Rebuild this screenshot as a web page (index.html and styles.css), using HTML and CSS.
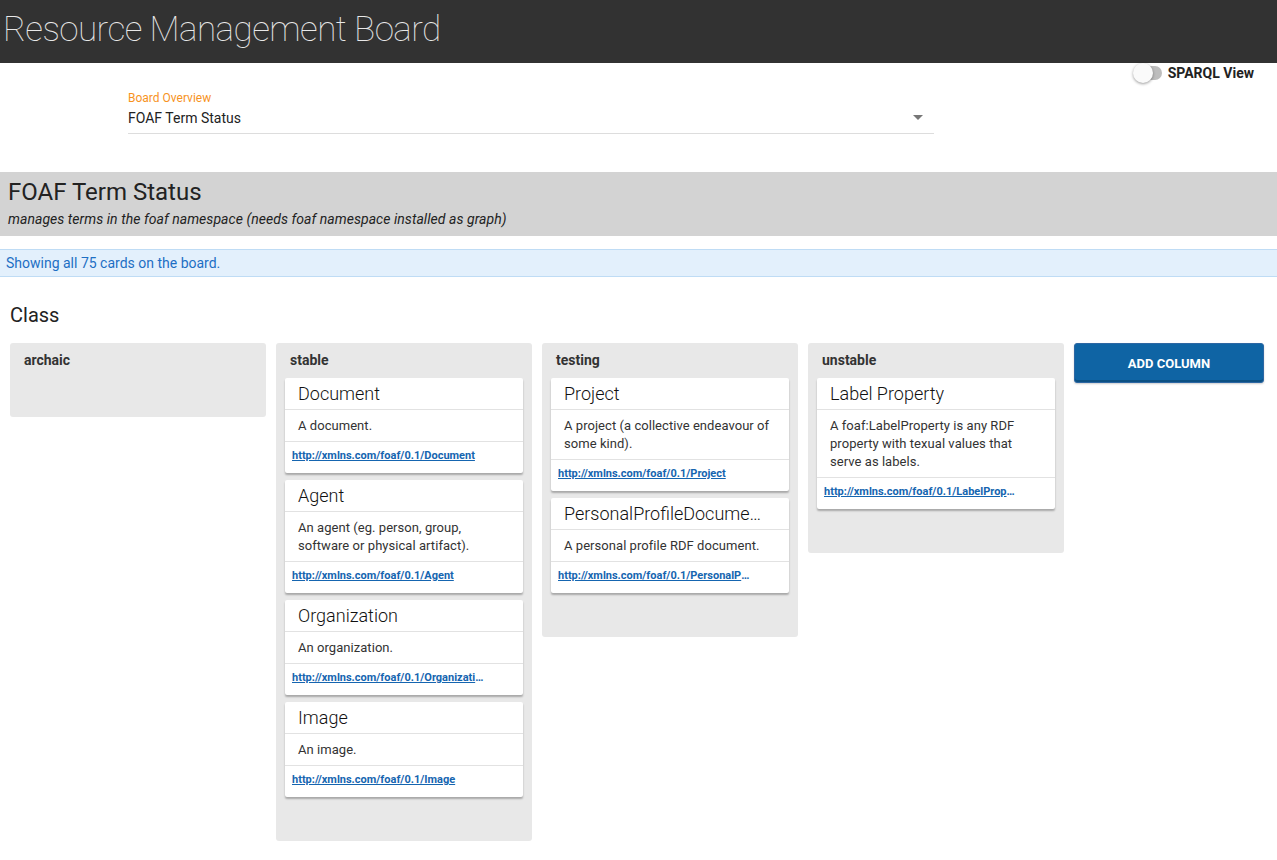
FILE: index.html
```html
<!DOCTYPE html>
<html>
<head>
<meta charset="utf-8">
<link rel="stylesheet" href="styles.css">
</head>
<body>
<header class="topbar"><h1 class="app-title">Resource Management Board</h1></header>

<div class="controls">
  <div class="select-field">
    <label class="select-label">Board Overview</label>
    <div class="select-value">
      <span>FOAF Term Status</span>
      <svg class="caret" width="10" height="5" viewBox="0 0 10 5"><path d="M0 0 L10 0 L5 5 Z" fill="#777"/></svg>
    </div>
  </div>
  <div class="toggle-wrap">
    <span class="toggle"><span class="track"></span><span class="thumb"></span></span>
    <span class="toggle-label">SPARQL View</span>
  </div>
</div>

<section class="board-head">
  <h2 class="board-title">FOAF Term Status</h2>
  <p class="board-desc">manages terms in the foaf namespace (needs foaf namespace installed as graph)</p>
</section>

<div class="info">Showing all 75 cards on the board.</div>

<h3 class="group-title">Class</h3>

<div class="columns">
  <div class="column">
    <div class="col-head">archaic</div>
    <div class="cards"></div>
  </div>
  <div class="column">
    <div class="col-head">stable</div>
    <div class="cards">
      <div class="card"><div class="card-title">Document</div><div class="card-desc">A document.</div><div class="card-link"><a href="#">http://xmlns.com/foaf/0.1/Document</a></div></div>
      <div class="card"><div class="card-title">Agent</div><div class="card-desc">An agent (eg. person, group, software or physical artifact).</div><div class="card-link"><a href="#">http://xmlns.com/foaf/0.1/Agent</a></div></div>
      <div class="card"><div class="card-title">Organization</div><div class="card-desc">An organization.</div><div class="card-link"><a href="#">http://xmlns.com/foaf/0.1/Organization</a></div></div>
      <div class="card"><div class="card-title">Image</div><div class="card-desc">An image.</div><div class="card-link"><a href="#">http://xmlns.com/foaf/0.1/Image</a></div></div>
    </div>
  </div>
  <div class="column">
    <div class="col-head">testing</div>
    <div class="cards">
      <div class="card"><div class="card-title">Project</div><div class="card-desc">A project (a collective endeavour of some kind).</div><div class="card-link"><a href="#">http://xmlns.com/foaf/0.1/Project</a></div></div>
      <div class="card"><div class="card-title">PersonalProfileDocument</div><div class="card-desc">A personal profile RDF document.</div><div class="card-link"><a href="#">http://xmlns.com/foaf/0.1/PersonalProfileDocument</a></div></div>
    </div>
  </div>
  <div class="column">
    <div class="col-head">unstable</div>
    <div class="cards">
      <div class="card"><div class="card-title">Label Property</div><div class="card-desc">A foaf:LabelProperty is any RDF property with texual values that serve as labels.</div><div class="card-link"><a href="#">http://xmlns.com/foaf/0.1/LabelProperty</a></div></div>
    </div>
  </div>
  <button class="add-col">ADD COLUMN</button>
</div>
</body>
</html>
```

FILE: styles.css
```css
* { box-sizing: border-box; }
html, body { margin: 0; padding: 0; }
body { font-family: Roboto, "Liberation Sans", sans-serif; color: #222; background: #fff; width: 1277px; }

.topbar { background: #323232; height: 63px; display: flex; align-items: center; padding-left: 3px; }
.app-title { margin: 0; font-weight: 100; font-size: 35px; letter-spacing: -0.55px; color: #e8e8e8; line-height: 1; position: relative; top: -2px; }

.controls { display: flex; justify-content: space-between; align-items: flex-start; height: 109px; padding-left: 128px; }
.select-field { width: 806px; padding-top: 28px; }
.select-label { display: block; font-size: 12px; color: #f7931e; line-height: 14px; }
.select-value { display: flex; justify-content: space-between; align-items: center; font-size: 14px; color: #222; height: 29px; border-bottom: 1px solid #ddd; padding-right: 11px; padding-bottom: 3px; }
.caret { display: block; }

.toggle-wrap { display: flex; align-items: center; gap: 7px; height: 20px; margin-top: 0; margin-right: 23px; }
.toggle { position: relative; width: 28px; height: 20px; display: block; }
.track { position: absolute; left: 3px; top: 3px; width: 26px; height: 14px; border-radius: 7px; background: #bdbdbd; }
.thumb { position: absolute; left: 0; top: 0; width: 20px; height: 20px; border-radius: 50%; background: #fafafa; box-shadow: 0 1px 3px rgba(0,0,0,0.4); }
.toggle-label { font-size: 14px; font-weight: 700; color: #222; }

.board-head { background: #d3d3d3; height: 64px; padding: 6px 8px 0; }
.board-title { margin: 0; font-size: 24px; font-weight: 400; line-height: 28px; color: #222; }
.board-desc { margin: 5px 0 0; font-size: 14px; font-style: italic; line-height: 17px; color: #222; letter-spacing: 0.05px; }

.info { margin-top: 13px; height: 28px; background: #e3f0fc; border-top: 1px solid #bfdcf5; border-bottom: 1px solid #bfdcf5; color: #1d6fc4; font-size: 14px; padding: 4px 6px; line-height: 18px; }

.group-title { margin: 26px 0 0 10px; font-size: 20px; font-weight: 400; line-height: 24px; color: #222; }

.columns { display: flex; align-items: flex-start; gap: 10px; padding: 16px 10px 0; }
.column { width: 256px; background: #e8e8e8; border-radius: 3px; padding: 0 9px 37px; }
.col-head { height: 35px; padding: 9px 5px 0; font-size: 14px; font-weight: 700; color: #333; }
.cards { display: flex; flex-direction: column; min-height: 2px; }
.card { background: #fff; border-radius: 2px; box-shadow: 0 2px 2px rgba(0,0,0,0.28); margin-bottom: 7px; }
.card-title { font-size: 18px; font-weight: 300; color: #111; line-height: 22px; padding: 5px 26px 4px 13px; border-bottom: 1px solid #e2e2e2; white-space: nowrap; overflow: hidden; text-overflow: ellipsis; }
.card-desc { font-size: 13px; color: #333; line-height: 18px; padding: 7px 13px 6px; border-bottom: 1px solid #e2e2e2; letter-spacing: 0.05px; }
.card-link { font-size: 11px; font-weight: 700; line-height: 15px; padding: 6px 38px 10px 7px; white-space: nowrap; overflow: hidden; text-overflow: ellipsis; color: #1565b0; }
.card-link a { color: #1565b0; text-decoration: underline; }

.add-col { width: 190px; height: 40px; background: #0f64a4; border: 1px solid #2d67a3; border-radius: 3px; color: #fff; font-family: Roboto, "Liberation Sans", sans-serif; font-weight: 700; font-size: 13px; box-shadow: inset 0 -2px 0 rgba(0,0,0,0.2), 0 1px 2px rgba(0,0,0,0.2); cursor: pointer; }
```
